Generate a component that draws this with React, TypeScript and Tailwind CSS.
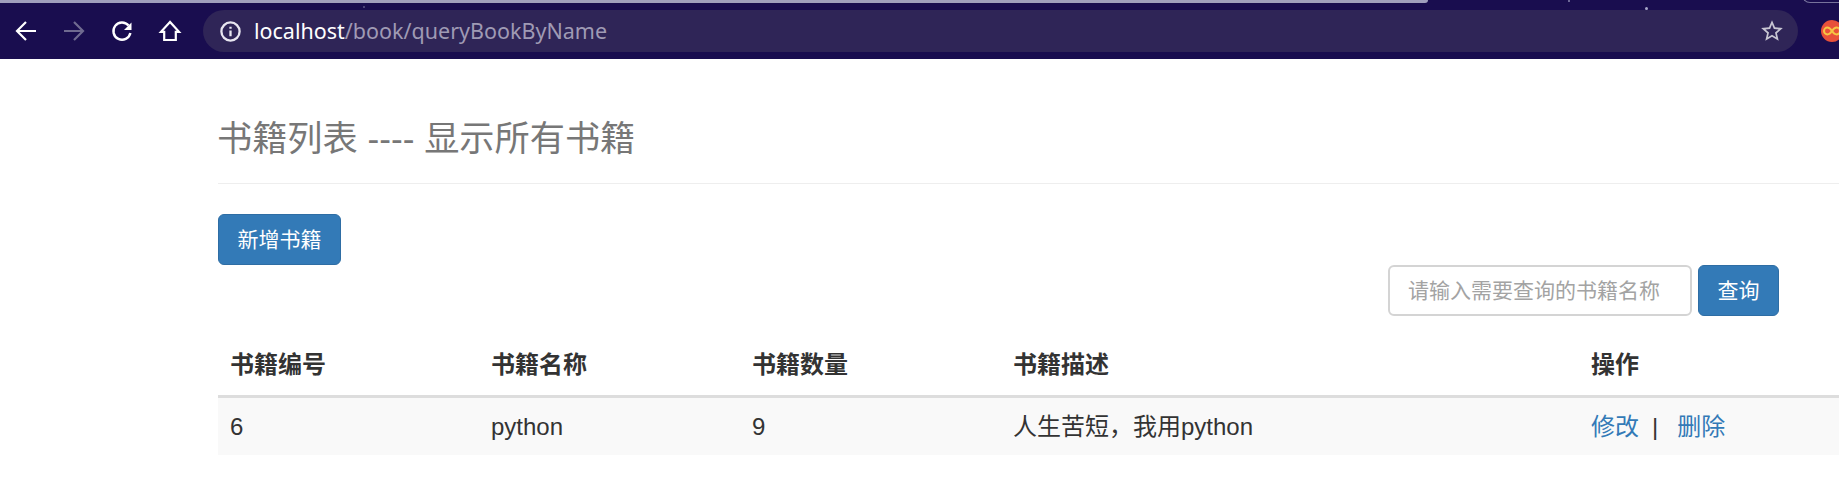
const font = "font-['Liberation_Sans','Noto_Sans_CJK_SC',sans-serif]"

function BrowserIcons() {
  return (
    <div className="flex w-[203px] shrink-0 items-center gap-[24px] pl-[14px]">
      <svg width="24" height="24" viewBox="0 0 24 24" fill="none" stroke="#fff" strokeWidth="2.2">
        <path d="M22 12H3M12 3l-9 9 9 9" />
      </svg>
      <svg width="24" height="24" viewBox="0 0 24 24" fill="none" stroke="#6f6a90" strokeWidth="2.2">
        <path d="M2 12h19M12 3l9 9-9 9" />
      </svg>
      <svg width="24" height="24" viewBox="0 0 24 24" fill="none" stroke="#fff" strokeWidth="2.4">
        <path d="M18.6 6.6A8.6 8.6 0 1 0 20.4 14" />
        <path d="M21.5 3.5v7.5H14z" fill="#fff" stroke="none" />
      </svg>
      <svg width="24" height="24" viewBox="0 0 24 24" fill="none" stroke="#fff" strokeWidth="2.2">
        <path d="M12 3 3 12.8h3.2V21h11.6v-8.2H21z" />
      </svg>
    </div>
  )
}

export default function App() {
  return (
    <div className={`min-h-[495px] w-full overflow-hidden bg-white text-[#333] ${font}`}>
      {/* browser bar */}
      <div className="relative flex h-[59px] items-center bg-[#190d4f] pt-[3px]">
        <div className="absolute left-0 top-0 h-[3px] w-[1428px] rounded-br-[4px] bg-[#a09fbd]" />
        <div className="absolute left-[1802px] top-[-8px] h-[11px] w-[60px] rounded-bl-[8px] border-b border-l border-[#77739c]" />
        <div className="absolute left-[363px] top-[6px] h-[2px] w-[2px] bg-[#4a4378]" />
        <div className="absolute left-[1568px] top-0 h-[2px] w-[2px] bg-[#6c6796]" />
        <div className="absolute left-[1645px] top-[7px] h-[3px] w-[3px] rounded-full bg-[#a8a6c8]" />
        <BrowserIcons />
        <div className="flex h-[42px] w-[1595px] shrink-0 items-center rounded-full bg-[#2f2557] pl-[16px] pr-[13px]">
          <svg width="23" height="23" viewBox="0 0 24 24" fill="none" stroke="#e8e6f0" strokeWidth="2.4">
            <circle cx="12" cy="12" r="9.5" />
            <path d="M12 11v6M12 7v2" />
          </svg>
          <span className="ml-[12px] font-['Noto_Sans',sans-serif] text-[21.5px] text-white">localhost</span>
          <span className="font-['Noto_Sans',sans-serif] text-[21.5px] text-[#9f9ab4]">/book/queryBookByName</span>
          <svg className="ml-auto" width="26" height="26" viewBox="0 0 24 24" fill="#c8c6d2">
            <path d="M22 9.24l-7.19-.62L12 2 9.19 8.63 2 9.24l5.46 4.73L5.82 21 12 17.27 18.18 21l-1.63-7.03L22 9.24zM12 15.4l-3.76 2.27 1-4.28-3.32-2.88 4.38-.38L12 6.1l1.71 4.04 4.38.38-3.32 2.88 1 4.28L12 15.4z" />
          </svg>
        </div>
        <svg className="ml-[23px] shrink-0" width="22" height="22" viewBox="0 0 22 22" fill="none">
          <circle cx="11" cy="11" r="11" fill="#e8503a" />
          <path
            d="M11 11c-1.6-2.4-3-3.4-4.6-3.4a3.4 3.4 0 0 0 0 6.8c1.6 0 3-1 4.6-3.4s3-3.4 4.6-3.4a3.4 3.4 0 0 1 0 6.8c-1.6 0-3-1-4.6-3.4z"
            stroke="#f6c644"
            strokeWidth="2"
          />
        </svg>
      </div>

      <div className="pl-[218px]">
        <div className="border-b border-[#eee] pt-[58px] pb-[23px]">
          <h1 className="-ml-[1px] text-[35.2px] leading-[43px] text-[#777]">书籍列表 ---- 显示所有书籍</h1>
        </div>

        <button className="mt-[30px] block h-[51px] w-[123px] rounded-[6px] border border-[#2e6da4] bg-[#337ab7] text-[21px] text-white">
          新增书籍
        </button>

        <div className="flex justify-end gap-[6px] pr-[60px]">
          <div className="flex h-[51px] w-[304px] items-center rounded-[6px] border-2 border-[#d4d4d4] pl-[18px] text-[21px] text-[#a3a3a3]">
            请输入需要查询的书籍名称
          </div>
          <button className="h-[51px] w-[81px] rounded-[6px] border border-[#2e6da4] bg-[#337ab7] text-[21px] text-white">
            查询
          </button>
        </div>

        <table className="mt-[19px] w-full table-fixed border-collapse text-left text-[24px]">
          <colgroup>
            <col className="w-[261px]" />
            <col className="w-[261px]" />
            <col className="w-[261px]" />
            <col className="w-[578px]" />
            <col />
          </colgroup>
          <thead>
            <tr className="h-[61px] border-b-[3px] border-[#ddd] font-bold">
              <th className="pl-3">书籍编号</th>
              <th className="pl-3">书籍名称</th>
              <th className="pl-3">书籍数量</th>
              <th className="pl-3">书籍描述</th>
              <th className="pl-3">操作</th>
            </tr>
          </thead>
          <tbody>
            <tr className="h-[59px] bg-[#f9f9f9]">
              <td className="pl-3 pt-[2px]">6</td>
              <td className="pl-3 pt-[2px]">python</td>
              <td className="pl-3 pt-[2px]">9</td>
              <td className="pl-3 pt-[2px]">人生苦短，我用python</td>
              <td className="pl-3 pt-[2px]">
                <a className="text-[#337ab7]">修改</a>
                <span className="ml-[13px]">|</span>
                <a className="ml-[19px] text-[#337ab7]">删除</a>
              </td>
            </tr>
          </tbody>
        </table>
      </div>
    </div>
  )
}
